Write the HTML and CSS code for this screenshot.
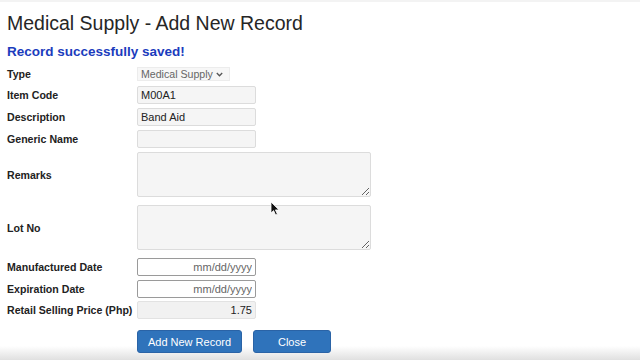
FILE: index.html
```html
<!DOCTYPE html>
<html lang="en">
<head>
<meta charset="utf-8">
<title>Medical Supply - Add New Record</title>
<link rel="stylesheet" href="styles.css">
</head>
<body>
<div class="page">
  <h1 class="title">Medical Supply - Add New Record</h1>
  <p class="notice">Record successfully saved!</p>
  <form class="form">
    <div class="row row-type">
      <label class="label">Type</label>
      <div class="select">
        <span class="select-text">Medical Supply</span>
        <svg class="chev" width="7" height="5" viewBox="0 0 7 5"><path d="M0.8 1 L3.5 3.8 L6.2 1" fill="none" stroke="#555" stroke-width="1.3"/></svg>
      </div>
    </div>
    <div class="row">
      <label class="label">Item Code</label>
      <input class="input" type="text" value="M00A1">
    </div>
    <div class="row">
      <label class="label">Description</label>
      <input class="input" type="text" value="Band Aid">
    </div>
    <div class="row">
      <label class="label">Generic Name</label>
      <input class="input" type="text" value="">
    </div>
    <div class="row row-tall">
      <label class="label">Remarks</label>
      <textarea class="area"></textarea>
    </div>
    <div class="row row-tall">
      <label class="label">Lot No</label>
      <textarea class="area"></textarea>
    </div>
    <div class="row">
      <label class="label">Manufactured Date</label>
      <input class="input date" type="text" placeholder="mm/dd/yyyy">
    </div>
    <div class="row row-exp">
      <label class="label">Expiration Date</label>
      <input class="input date" type="text" placeholder="mm/dd/yyyy">
    </div>
    <div class="row">
      <label class="label">Retail Selling Price (Php)</label>
      <input class="input price" type="text" value="1.75" readonly>
    </div>
    <div class="actions">
      <button class="btn btn-add" type="button">Add New Record</button>
      <button class="btn btn-close" type="button">Close</button>
    </div>
  </form>
  <svg class="cursor" width="11" height="15" viewBox="0 0 11 15"><path d="M1 1 L1 12 L3.6 9.6 L5.6 14 L7.4 13.2 L5.4 8.9 L9 8.9 Z" fill="#111" stroke="#fff" stroke-width="0.8"/></svg>
</div>
</body>
</html>
```
FILE: styles.css
```css
html {
  background: linear-gradient(to bottom, #fff 0, #fff 346px, #e0e0e0 360px);
  min-height: 360px;
}
body {
  margin: 0;
  font-family: "Liberation Sans", Arial, sans-serif;
  color: #222;
}
.page {
  position: relative;
  height: 360px;
  box-sizing: border-box;
  padding: 12px 7px 0;
  border-top: 2px solid #f3f3f3;
}
.title {
  margin: 0;
  margin-top: -2px;
  font-size: 19.5px;
  line-height: 22px;
  font-weight: normal;
  color: #262626;
}
.notice {
  margin: 10px 0 0;
  font-size: 13.5px;
  line-height: 16px;
  font-weight: bold;
  color: #1b3cbd;
}
.form {
  margin-top: 7px;
}
.row {
  display: flex;
  align-items: center;
  margin-bottom: 4px;
}
.row-type { margin-bottom: 5px; }
.row-tall { margin-bottom: 8px; }
.row-exp { margin-bottom: 3px; }
.label {
  width: 130px;
  flex: none;
  font-size: 10.6px;
  font-weight: bold;
  color: #222;
}
.select {
  box-sizing: border-box;
  width: 93px;
  height: 14px;
  display: flex;
  align-items: center;
  gap: 3px;
  padding: 0 0 0 3px;
  background: #f7f7f7;
  border: 1px solid #ececec;
  font-size: 10.6px;
  color: #666;
  white-space: nowrap;
}
.chev { flex: none; }
.input {
  box-sizing: border-box;
  width: 119px;
  height: 18px;
  margin: 0;
  padding: 0 3px;
  border: 1px solid #dcdcdc;
  border-radius: 2px;
  background: #f5f5f5;
  font-family: "Liberation Sans", Arial, sans-serif;
  font-size: 11px;
  color: #222;
  outline: none;
}
.date {
  background: #fff;
  border-color: #9a9a9a;
  text-align: right;
}
.date::placeholder { color: #666; }
.price {
  background: #f1f1f1;
  border-color: #e2e2e2;
  text-align: right;
}
.area {
  box-sizing: border-box;
  display: block;
  width: 234px;
  height: 45px;
  margin: 0;
  padding: 2px 3px;
  border: 1px solid #dcdcdc;
  border-radius: 2px;
  background: #f5f5f5;
  outline: none;
}
.actions {
  display: flex;
  gap: 11px;
  margin-top: 11px;
  padding-left: 130px;
}
.btn {
  box-sizing: border-box;
  height: 23px;
  border: 1px solid #2a63a6;
  border-radius: 3px;
  background: #2f73bb;
  color: #fff;
  font-family: "Liberation Sans", Arial, sans-serif;
  font-size: 11px;
  padding: 0;
}
.btn-add { width: 105px; }
.btn-close { width: 78px; }
.cursor {
  position: absolute;
  left: 270px;
  top: 199px;
}
```
